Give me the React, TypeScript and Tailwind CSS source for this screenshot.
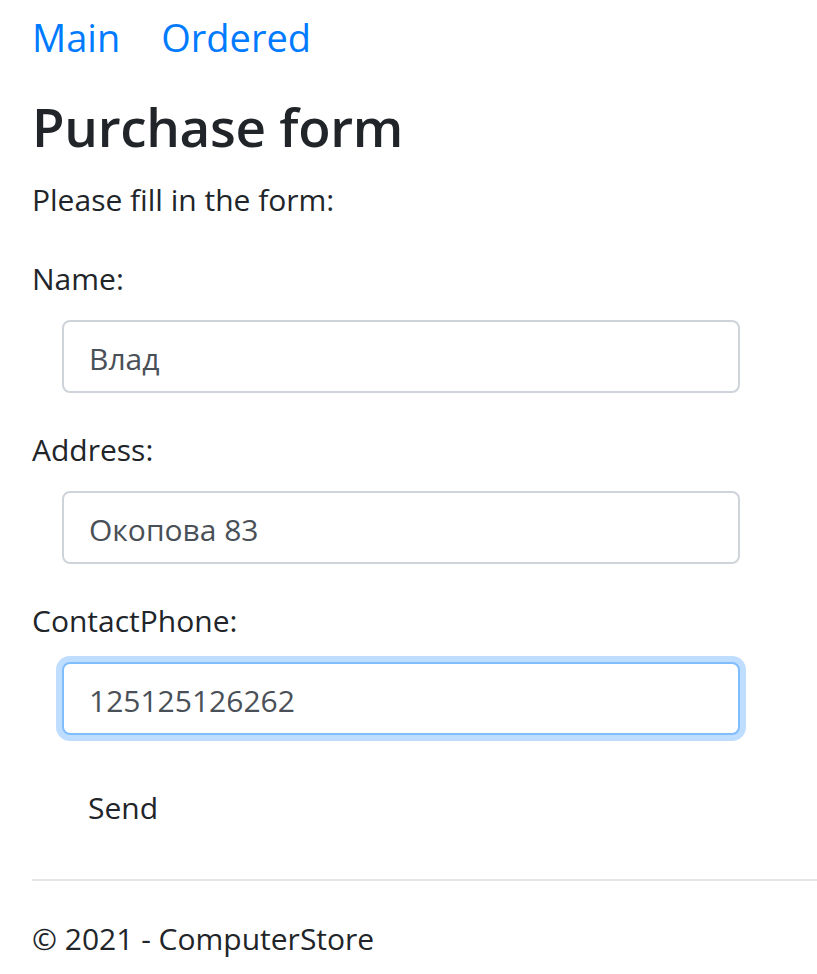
import React from "react";

const font = { fontFamily: '"Open Sans", "Noto Sans", sans-serif' };

function Field({ label, value, focused }: { label: string; value: string; focused?: boolean }) {
  return (
    <div className="flex flex-col">
      <label className="text-[30px] leading-[46px] text-[#212529] -mt-[2px] mb-[2px]">{label}</label>
      <input
        readOnly
        value={value}
        className={
          "mt-[16px] ml-[30px] w-[678px] h-[73px] rounded-[8px] bg-white px-[25px] pt-[3px] text-[30px] text-[#495057] outline-none " +
          (focused
            ? "border-2 border-[#80bdff] shadow-[0_0_0_6px_rgba(0,123,255,0.25)]"
            : "border-2 border-[#ced4da]")
        }
      />
    </div>
  );
}

export default function App() {
  return (
    <div style={font} className="w-[817px] h-[974px] bg-white overflow-hidden">
      <div className="pl-[32px]">
        <nav className="flex h-[75px] items-center gap-[41px] text-[38px] leading-[75px] text-[#007bff]">
          <a>Main</a>
          <a>Ordered</a>
        </nav>
        <h1 className="mt-[17px] text-[53px] leading-[70px] font-semibold tracking-[-0.3px] text-[#212529]">Purchase form</h1>
        <p className="mt-[15px] text-[30px] leading-[46px] text-[#212529]">Please fill in the form:</p>
        <form className="mt-[35px] flex flex-col gap-[36px]">
          <Field label="Name:" value="Влад" />
          <Field label="Address:" value="Окопова 83" />
          <Field label="ContactPhone:" value="125125126262" focused />
          <div>
            <button type="button" className="ml-[30px] h-[73px] px-[26px] text-[30px] text-[#212529]">
              Send
            </button>
          </div>
        </form>
        <hr className="mt-[35px] border-0 border-t-2 border-[#e5e5e5]" />
        <footer className="mt-[35px] text-[30px] leading-[46px] text-[#212529]">© 2021 - ComputerStore</footer>
      </div>
    </div>
  );
}
